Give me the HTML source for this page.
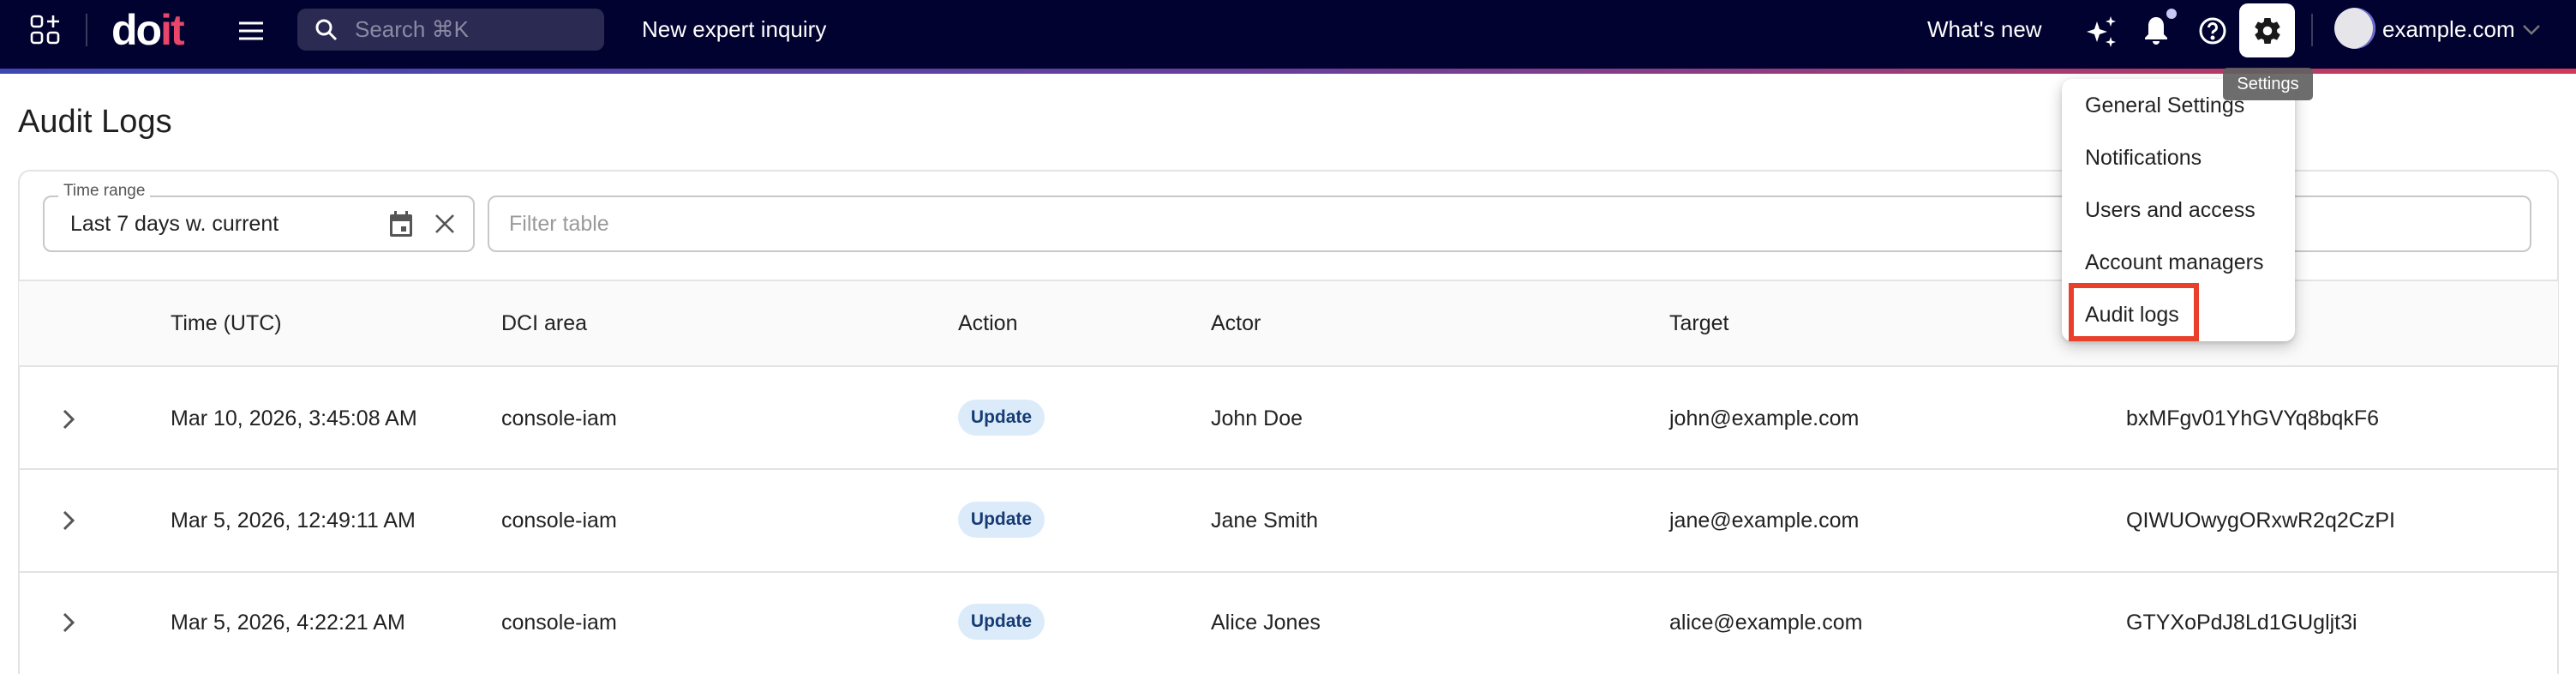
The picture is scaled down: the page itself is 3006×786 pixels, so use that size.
<!DOCTYPE html>
<html style="overflow:hidden;height:786px"><head><meta charset="utf-8"><style>
*{margin:0;padding:0;box-sizing:border-box}
html,body{overflow:hidden}
body{width:3006px;height:786px;background:#fff;font-family:"Liberation Sans",Arial,sans-serif;color:#1f1f1f}
#wrap{position:relative;width:3006px;height:786px;overflow:hidden}
.a{position:absolute;white-space:nowrap}
.hdr{position:absolute;left:0;top:0;width:3006px;height:80px;background:#020230}
.grad{position:absolute;left:0;top:80px;width:3006px;height:6px;background:linear-gradient(90deg,#3f47b4,#6a3f9a 50%,#d13a55)}
.w{color:#fff;font-size:26px}
.cell{font-size:25px;color:#222;top:0}
.row{position:absolute;left:22px;width:2963px;height:120px;border-bottom:2px solid #e3e3e3}
.chip{position:absolute;left:1096px;top:38px;width:101px;height:42px;border-radius:21px;background:#dcebfa;color:#173c75;font-size:21px;font-weight:bold;text-align:center;line-height:42px}
.mi{position:absolute;left:27px;font-size:25px;color:#222}
</style></head><body><div id="wrap">
<div class="hdr"></div>
<div class="grad"></div>
<svg class="a" style="left:34px;top:16px" width="38" height="38" viewBox="0 0 38 38" fill="none" stroke="#fff" stroke-width="2.6"><rect x="3" y="3" width="12" height="12" rx="3"/><rect x="3" y="22" width="12" height="12" rx="3"/><rect x="22" y="22" width="12" height="12" rx="3"/><path d="M28 2v14M21 9h14"/></svg>
<div class="a" style="left:100px;top:16px;width:2px;height:38px;background:#3a3a5a"></div>
<div class="a" style="left:130px;top:6px;font-size:50px;font-weight:bold;color:#fff;letter-spacing:-2px">do<span style="color:#e8466a">it</span></div>
<svg class="a" style="left:278px;top:24px" width="30" height="24" viewBox="0 0 30 24" stroke="#fff" stroke-width="3"><path d="M1 3h28M1 12h28M1 21h28"/></svg>
<div class="a" style="left:347px;top:10px;width:358px;height:49px;border-radius:10px;background:#2a2a52"></div>
<svg class="a" style="left:366px;top:20px" width="30" height="30" viewBox="0 0 30 30" fill="none" stroke="#fff" stroke-width="3"><circle cx="12" cy="12" r="8"/><path d="M18 18l8 8"/></svg>
<div class="a" style="left:414px;top:19px;font-size:26px;color:#8a8aa3">Search ⌘K</div>
<div class="a w" style="left:749px;top:19px">New expert inquiry</div>
<div class="a w" style="left:2249px;top:19px">What's new</div>
<svg class="a" style="left:2433px;top:17px" width="40" height="40" viewBox="0 0 40 40" fill="#fff"><path d="M14 8l3 9 9 3-9 3-3 9-3-9-9-3 9-3z"/><path d="M30 2l1.5 4.5 4.5 1.5-4.5 1.5L30 14l-1.5-4.5L24 8l4.5-1.5z"/><path d="M30 26l1.5 4.5 4.5 1.5-4.5 1.5L30 38l-1.5-4.5L24 32l4.5-1.5z"/></svg>
<svg class="a" style="left:2500px;top:18px" width="34" height="36" viewBox="0 0 34 36" fill="#fff"><path d="M16 2c-6 0-9 5-9 10v10l-4 4v2h26v-2l-4-4V12c0-5-3-10-9-10z"/><path d="M12 30h8a4 4 0 0 1-8 0z"/></svg>
<div class="a" style="left:2528px;top:10px;width:12px;height:12px;border-radius:50%;background:#c7c8f5"></div>
<svg class="a" style="left:2565px;top:19px" width="34" height="34" viewBox="0 0 34 34" fill="none" stroke="#fff" stroke-width="3"><circle cx="17" cy="17" r="14"/><path d="M12.5 13a4.5 4.5 0 1 1 6 4.2c-1.2.5-1.5 1.3-1.5 3"/><circle cx="17" cy="25" r="1" fill="#fff"/></svg>
<div class="a" style="left:2613px;top:4px;width:65px;height:63px;border-radius:10px;background:#fff"></div>
<svg class="a" style="left:2628px;top:18px" width="36" height="36" viewBox="0 0 24 24" fill="#1a1a1a"><path d="M19.4 13c.04-.33.06-.66.06-1s-.02-.67-.06-1l2.1-1.65c.2-.15.25-.42.12-.64l-2-3.46c-.12-.22-.39-.3-.61-.22l-2.49 1c-.52-.4-1.08-.73-1.69-.98l-.38-2.65A.49.49 0 0 0 14 2h-4c-.25 0-.46.18-.49.42l-.38 2.65c-.61.25-1.17.59-1.69.98l-2.49-1c-.23-.09-.49 0-.61.22l-2 3.46c-.13.22-.07.49.12.64L4.57 11c-.04.33-.07.67-.07 1s.03.67.07 1l-2.11 1.65c-.19.15-.24.42-.12.64l2 3.46c.12.22.39.3.61.22l2.49-1c.52.4 1.08.73 1.69.98l.38 2.65c.03.24.24.42.49.42h4c.25 0 .46-.18.49-.42l.38-2.65c.61-.25 1.17-.59 1.69-.98l2.49 1c.23.09.49 0 .61-.22l2-3.46c.12-.22.07-.49-.12-.64L19.4 13zM12 15.5a3.5 3.5 0 1 1 0-7 3.5 3.5 0 0 1 0 7z"/></svg>
<div class="a" style="left:2697px;top:16px;width:2px;height:38px;background:#3a3a5a"></div>
<div class="a" style="left:2724px;top:9px;width:48px;height:48px;border-radius:50%;background:#e6e6ea;box-shadow:-3px 0 0 #6a6ad0 inset"></div>
<div class="a w" style="left:2780px;top:19px">example.com</div>
<svg class="a" style="left:2943px;top:28px" width="22" height="14" viewBox="0 0 22 14" fill="none" stroke="#777" stroke-width="2.5"><path d="M2 2l9 9 9-9"/></svg>

<div class="a" style="left:21px;top:121px;font-size:38px;color:#1f1f1f">Audit Logs</div>

<div class="a" style="left:21px;top:198px;width:2965px;height:588px;border:2px solid #e3e3e3;border-bottom:none;border-radius:14px 14px 0 0"></div>
<div class="a" style="left:50px;top:228px;width:504px;height:66px;border:2px solid #c8c8c8;border-radius:10px"></div>
<div class="a" style="left:68px;top:212px;font-size:19px;color:#555;background:#fff;padding:0 6px">Time range</div>
<div class="a" style="left:82px;top:247px;font-size:25px;color:#222">Last 7 days w. current</div>
<svg class="a" style="left:453px;top:245px" width="30" height="32" viewBox="0 0 30 32" fill="#555"><path d="M4 5h22a2 2 0 0 1 2 2v22a2 2 0 0 1-2 2H4a2 2 0 0 1-2-2V7a2 2 0 0 1 2-2zm1 8v15h20V13z"/><rect x="7" y="1" width="3" height="6"/><rect x="20" y="1" width="3" height="6"/><rect x="15" y="19" width="6" height="6"/></svg>
<svg class="a" style="left:507px;top:249px" width="24" height="24" viewBox="0 0 24 24" stroke="#555" stroke-width="2.6"><path d="M2 2l20 20M22 2L2 22"/></svg>
<div class="a" style="left:569px;top:228px;width:2385px;height:66px;border:2px solid #c8c8c8;border-radius:10px"></div>
<div class="a" style="left:594px;top:247px;font-size:25px;color:#9a9a9a">Filter table</div>

<div class="a" style="left:22px;top:326px;width:2963px;height:102px;background:#fafafa;border-top:2px solid #e3e3e3;border-bottom:2px solid #e3e3e3"></div>
<div class="a" style="left:199px;top:363px;font-size:25px;color:#222">Time (UTC)</div>
<div class="a" style="left:585px;top:363px;font-size:25px;color:#222">DCI area</div>
<div class="a" style="left:1118px;top:363px;font-size:25px;color:#222">Action</div>
<div class="a" style="left:1413px;top:363px;font-size:25px;color:#222">Actor</div>
<div class="a" style="left:1948px;top:363px;font-size:25px;color:#222">Target</div>

<div class="row" style="top:428px">
<svg class="a" style="left:50px;top:48px" width="16" height="26" viewBox="0 0 16 26" fill="none" stroke="#555" stroke-width="3"><path d="M3 3l10 10-10 10"/></svg>
<div class="a cell" style="left:177px;top:46px">Mar 10, 2026, 3:45:08 AM</div>
<div class="a cell" style="left:563px;top:46px">console-iam</div>
<div class="chip">Update</div>
<div class="a cell" style="left:1391px;top:46px">John Doe</div>
<div class="a cell" style="left:1926px;top:46px">john@example.com</div>
<div class="a cell" style="left:2459px;top:46px">bxMFgv01YhGVYq8bqkF6</div>
</div>
<div class="row" style="top:548px">
<svg class="a" style="left:50px;top:46px" width="16" height="26" viewBox="0 0 16 26" fill="none" stroke="#555" stroke-width="3"><path d="M3 3l10 10-10 10"/></svg>
<div class="a cell" style="left:177px;top:45px">Mar 5, 2026, 12:49:11 AM</div>
<div class="a cell" style="left:563px;top:45px">console-iam</div>
<div class="chip" style="top:37px">Update</div>
<div class="a cell" style="left:1391px;top:45px">Jane Smith</div>
<div class="a cell" style="left:1926px;top:45px">jane@example.com</div>
<div class="a cell" style="left:2459px;top:45px">QIWUOwygORxwR2q2CzPI</div>
</div>
<div class="row" style="top:667px;height:119px;border-bottom:none">
<svg class="a" style="left:50px;top:46px" width="16" height="26" viewBox="0 0 16 26" fill="none" stroke="#555" stroke-width="3"><path d="M3 3l10 10-10 10"/></svg>
<div class="a cell" style="left:177px;top:45px">Mar 5, 2026, 4:22:21 AM</div>
<div class="a cell" style="left:563px;top:45px">console-iam</div>
<div class="chip" style="top:37px">Update</div>
<div class="a cell" style="left:1391px;top:45px">Alice Jones</div>
<div class="a cell" style="left:1926px;top:45px">alice@example.com</div>
<div class="a cell" style="left:2459px;top:45px">GTYXoPdJ8Ld1GUgljt3i</div>
</div>

<div class="a" style="left:2406px;top:92px;width:272px;height:306px;background:#fff;border-radius:12px;box-shadow:0 6px 18px rgba(0,0,0,.22),0 2px 5px rgba(0,0,0,.12)">
<div class="mi" style="top:17px">General Settings</div>
<div class="mi" style="top:78px">Notifications</div>
<div class="mi" style="top:139px">Users and access</div>
<div class="mi" style="top:200px">Account managers</div>
<div class="mi" style="top:261px">Audit logs</div>
<div class="a" style="left:8px;top:238px;width:152px;height:68px;border:6px solid #e8402a"></div>
</div>
<div class="a" style="left:2594px;top:79px;width:105px;height:38px;border-radius:5px;background:rgba(97,97,97,.92);color:#fff;font-size:20px;text-align:center;line-height:38px">Settings</div>
</div></body></html>
